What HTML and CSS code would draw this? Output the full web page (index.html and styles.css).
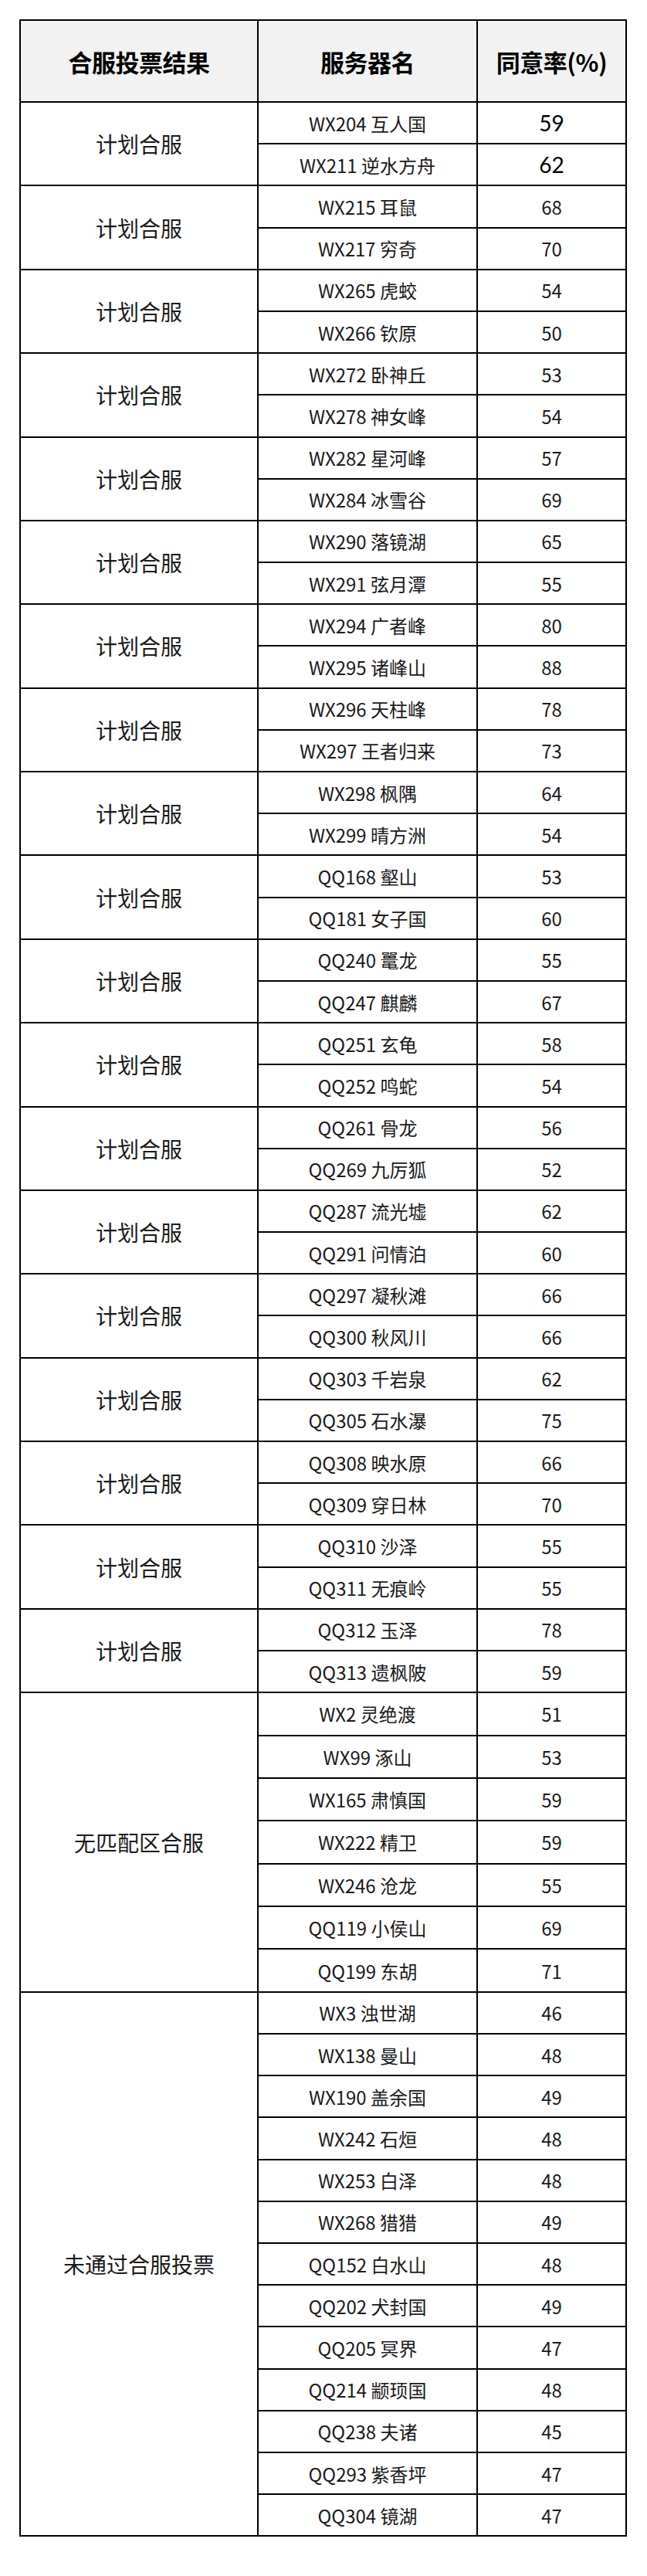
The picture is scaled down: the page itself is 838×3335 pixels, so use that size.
FILE: index.html
```html
<!DOCTYPE html>
<html lang="zh-CN">
<head>
<meta charset="utf-8">
<title>合服投票结果</title>
<link rel="stylesheet" href="styles.css">
</head>
<body>
<table class="vote">
<colgroup><col class="c1"><col class="c2"><col class="c3"></colgroup>
<thead>
<tr class="head"><th>合服投票结果</th><th>服务器名</th><th>同意率(%)</th></tr>
</thead>
<tbody>
<tr><td class="group" rowspan="2">计划合服</td><td class="name">WX204 互人国</td><td class="rate alt">59</td></tr>
<tr><td class="name">WX211 逆水方舟</td><td class="rate alt">62</td></tr>
<tr><td class="group" rowspan="2">计划合服</td><td class="name">WX215 耳鼠</td><td class="rate">68</td></tr>
<tr><td class="name">WX217 穷奇</td><td class="rate">70</td></tr>
<tr><td class="group" rowspan="2">计划合服</td><td class="name">WX265 虎蛟</td><td class="rate">54</td></tr>
<tr><td class="name">WX266 钦原</td><td class="rate">50</td></tr>
<tr><td class="group" rowspan="2">计划合服</td><td class="name">WX272 卧神丘</td><td class="rate">53</td></tr>
<tr><td class="name">WX278 神女峰</td><td class="rate">54</td></tr>
<tr><td class="group" rowspan="2">计划合服</td><td class="name">WX282 星河峰</td><td class="rate">57</td></tr>
<tr><td class="name">WX284 冰雪谷</td><td class="rate">69</td></tr>
<tr><td class="group" rowspan="2">计划合服</td><td class="name">WX290 落镜湖</td><td class="rate">65</td></tr>
<tr><td class="name">WX291 弦月潭</td><td class="rate">55</td></tr>
<tr><td class="group" rowspan="2">计划合服</td><td class="name">WX294 广者峰</td><td class="rate">80</td></tr>
<tr><td class="name">WX295 诸峰山</td><td class="rate">88</td></tr>
<tr><td class="group" rowspan="2">计划合服</td><td class="name">WX296 天柱峰</td><td class="rate">78</td></tr>
<tr><td class="name">WX297 王者归来</td><td class="rate">73</td></tr>
<tr><td class="group" rowspan="2">计划合服</td><td class="name">WX298 枫隅</td><td class="rate">64</td></tr>
<tr><td class="name">WX299 晴方洲</td><td class="rate">54</td></tr>
<tr><td class="group" rowspan="2">计划合服</td><td class="name">QQ168 壑山</td><td class="rate">53</td></tr>
<tr><td class="name">QQ181 女子国</td><td class="rate">60</td></tr>
<tr><td class="group" rowspan="2">计划合服</td><td class="name">QQ240 鼍龙</td><td class="rate">55</td></tr>
<tr><td class="name">QQ247 麒麟</td><td class="rate">67</td></tr>
<tr><td class="group" rowspan="2">计划合服</td><td class="name">QQ251 玄龟</td><td class="rate">58</td></tr>
<tr><td class="name">QQ252 鸣蛇</td><td class="rate">54</td></tr>
<tr><td class="group" rowspan="2">计划合服</td><td class="name">QQ261 骨龙</td><td class="rate">56</td></tr>
<tr><td class="name">QQ269 九厉狐</td><td class="rate">52</td></tr>
<tr><td class="group" rowspan="2">计划合服</td><td class="name">QQ287 流光墟</td><td class="rate">62</td></tr>
<tr><td class="name">QQ291 问情泊</td><td class="rate">60</td></tr>
<tr><td class="group" rowspan="2">计划合服</td><td class="name">QQ297 凝秋滩</td><td class="rate">66</td></tr>
<tr><td class="name">QQ300 秋风川</td><td class="rate">66</td></tr>
<tr><td class="group" rowspan="2">计划合服</td><td class="name">QQ303 千岩泉</td><td class="rate">62</td></tr>
<tr><td class="name">QQ305 石水瀑</td><td class="rate">75</td></tr>
<tr><td class="group" rowspan="2">计划合服</td><td class="name">QQ308 映水原</td><td class="rate">66</td></tr>
<tr><td class="name">QQ309 穿日林</td><td class="rate">70</td></tr>
<tr><td class="group" rowspan="2">计划合服</td><td class="name">QQ310 沙泽</td><td class="rate">55</td></tr>
<tr><td class="name">QQ311 无痕岭</td><td class="rate">55</td></tr>
<tr><td class="group" rowspan="2">计划合服</td><td class="name">QQ312 玉泽</td><td class="rate">78</td></tr>
<tr><td class="name">QQ313 遗枫陂</td><td class="rate">59</td></tr>
<tr class="tall"><td class="group" rowspan="7">无匹配区合服</td><td class="name">WX2 灵绝渡</td><td class="rate">51</td></tr>
<tr class="tall"><td class="name">WX99 涿山</td><td class="rate">53</td></tr>
<tr class="tall"><td class="name">WX165 肃慎国</td><td class="rate">59</td></tr>
<tr class="tall"><td class="name">WX222 精卫</td><td class="rate">59</td></tr>
<tr class="tall"><td class="name">WX246 沧龙</td><td class="rate">55</td></tr>
<tr class="tall"><td class="name">QQ119 小侯山</td><td class="rate">69</td></tr>
<tr class="tall"><td class="name">QQ199 东胡</td><td class="rate">71</td></tr>
<tr><td class="group" rowspan="13">未通过合服投票</td><td class="name">WX3 浊世湖</td><td class="rate">46</td></tr>
<tr><td class="name">WX138 曼山</td><td class="rate">48</td></tr>
<tr><td class="name">WX190 盖余国</td><td class="rate">49</td></tr>
<tr><td class="name">WX242 石烜</td><td class="rate">48</td></tr>
<tr><td class="name">WX253 白泽</td><td class="rate">48</td></tr>
<tr><td class="name">WX268 猎猎</td><td class="rate">49</td></tr>
<tr><td class="name">QQ152 白水山</td><td class="rate">48</td></tr>
<tr><td class="name">QQ202 犬封国</td><td class="rate">49</td></tr>
<tr><td class="name">QQ205 冥界</td><td class="rate">47</td></tr>
<tr><td class="name">QQ214 颛顼国</td><td class="rate">48</td></tr>
<tr><td class="name">QQ238 夫诸</td><td class="rate">45</td></tr>
<tr><td class="name">QQ293 紫香坪</td><td class="rate">47</td></tr>
<tr><td class="name">QQ304 镜湖</td><td class="rate">47</td></tr>
</tbody>
</table>
</body>
</html>
```
FILE: styles.css
```css
html, body {
  margin: 0;
  padding: 0;
  background: #ffffff;
}

body {
  font-family: "Noto Sans CJK SC", "Noto Sans", sans-serif;
  color: #1c1c1c;
}

.vote {
  margin: 25px 0 0 25px;
  width: 785px;
  border-collapse: collapse;
  table-layout: fixed;
}

.c1 { width: 308px; }
.c2 { width: 284px; }
.c3 { width: 193px; }

.vote th,
.vote td {
  border: 2px solid #000;
  padding: 0;
  text-align: center;
  vertical-align: middle;
}

.head {
  height: 106px;
}

.head th {
  background: #f2f2f2;
  font-size: 31px;
  font-weight: 700;
  color: #000;
  letter-spacing: -0.5px;
}

.vote tbody tr {
  height: 54.2px;
}

.vote tbody tr.tall {
  height: 55.4px;
}

.group {
  font-size: 28px;
  font-weight: 400;
  color: #1a1a1a;
}

.name {
  font-size: 24px;
  font-weight: 400;
  color: #1a1a1a;
}

.rate {
  font-size: 24px;
  color: #1a1a1a;
}

.rate.alt {
  font-family: Lato, "Noto Sans", sans-serif;
  font-size: 28px;
  color: #000;
}
```
